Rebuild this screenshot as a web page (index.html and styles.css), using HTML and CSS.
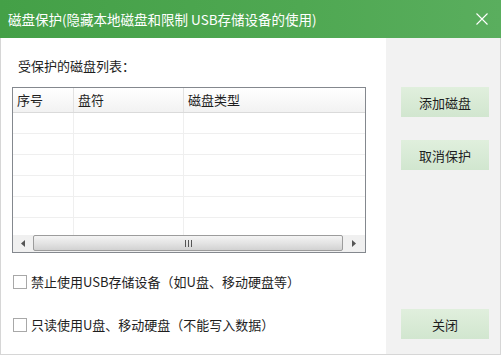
FILE: index.html
```html
<!DOCTYPE html>
<html lang="zh-CN">
<head>
    <meta charset="UTF-8">
    <title>磁盘保护</title>
    <link rel="stylesheet" href="styles.css">
</head>
<body>

<div class="window">
    <div class="titlebar">
        <span class="title">磁盘保护(隐藏本地磁盘和限制 USB存储设备的使用)</span>
        <svg class="close" width="12" height="12" viewBox="0 0 12 12">
            <path d="M0.5 0.5 L11.5 11.5 M11.5 0.5 L0.5 11.5" stroke="#ffffff" stroke-width="1.1" fill="none"/>
        </svg>
    </div>

    <div class="content">
        <div class="main">
            <div class="list-label">受保护的磁盘列表：</div>

            <div class="disk-list">
                <div class="list-head">
                    <div class="col col-no">序号</div>
                    <div class="col col-letter">盘符</div>
                    <div class="col col-type">磁盘类型</div>
                </div>
                <div class="list-body">
                    <div class="row"><div class="col col-no"></div><div class="col col-letter"></div><div class="col col-type"></div></div>
                    <div class="row"><div class="col col-no"></div><div class="col col-letter"></div><div class="col col-type"></div></div>
                    <div class="row"><div class="col col-no"></div><div class="col col-letter"></div><div class="col col-type"></div></div>
                    <div class="row"><div class="col col-no"></div><div class="col col-letter"></div><div class="col col-type"></div></div>
                    <div class="row"><div class="col col-no"></div><div class="col col-letter"></div><div class="col col-type"></div></div>
                    <div class="row"><div class="col col-no"></div><div class="col col-letter"></div><div class="col col-type"></div></div>
                </div>
                <div class="hscroll">
                    <div class="arrow-btn">
                        <svg width="4" height="7" viewBox="0 0 4 7"><path d="M4 0 L0 3.5 L4 7 Z" fill="#555"/></svg>
                    </div>
                    <div class="thumb">
                        <span class="grip"></span><span class="grip"></span><span class="grip"></span>
                    </div>
                    <div class="arrow-btn">
                        <svg width="4" height="7" viewBox="0 0 4 7"><path d="M0 0 L4 3.5 L0 7 Z" fill="#555"/></svg>
                    </div>
                </div>
            </div>

            <label class="check">
                <span class="box"></span>
                <span>禁止使用USB存储设备（如U盘、移动硬盘等）</span>
            </label>
            <label class="check">
                <span class="box"></span>
                <span>只读使用U盘、移动硬盘（不能写入数据）</span>
            </label>
        </div>

        <div class="side">
            <button class="btn">添加磁盘</button>
            <button class="btn">取消保护</button>
            <button class="btn btn-close">关闭</button>
        </div>
    </div>
</div>

</body>
</html>
```

FILE: styles.css
```css
body {
    margin: 0;
    padding: 0;
    font-family: "Noto Sans CJK SC", "Noto Sans", sans-serif;
    font-size: 13px;
    color: #1e1e1e;
    background-color: #ffffff;
}

.window {
    width: 501px;
    height: 355px;
    box-sizing: border-box;
    border: 1px solid #d6d6d6;
    border-top: none;
    display: flex;
    flex-direction: column;
}

.titlebar {
    height: 38px;
    margin: 0 -1px;
    padding: 0 13px 0 8px;
    background: linear-gradient(to right, #44a047, #4fa852 60%, #5aae5e);
    color: #ffffff;
    display: flex;
    align-items: center;
    justify-content: space-between;
    flex-shrink: 0;
}

.title {
    font-size: 13.5px;
    line-height: 18px;
}

.close {
    display: block;
}

.content {
    flex: 1;
    display: flex;
}

.main {
    width: 385px;
    padding: 20px 0 0 11px;
    box-sizing: border-box;
    background-color: #ffffff;
}

.list-label {
    line-height: 16px;
    padding-left: 6px;
    margin-bottom: 13px;
}

.disk-list {
    width: 354px;
    height: 166px;
    box-sizing: border-box;
    border: 1px solid #84888e;
    display: flex;
    flex-direction: column;
    overflow: hidden;
}

.list-head {
    height: 24px;
    flex-shrink: 0;
    display: flex;
    background: linear-gradient(#ffffff, #f2f2f2);
    border-bottom: 1px solid #dadada;
}

.list-head .col {
    line-height: 24px;
    padding-left: 4px;
    border-right: 1px solid #e2e2e2;
}

.col {
    box-sizing: border-box;
    flex-shrink: 0;
}

.col-no {
    width: 61px;
}

.col-letter {
    width: 110px;
}

.col-type {
    width: 200px;
}

.list-body {
    flex: 1;
    overflow: hidden;
}

.row {
    height: 21px;
    box-sizing: border-box;
    display: flex;
    border-bottom: 1px solid #efefef;
}

.row .col {
    border-right: 1px solid #efefef;
}

.hscroll {
    height: 17px;
    flex-shrink: 0;
    display: flex;
    background-color: #f0f0f0;
}

.arrow-btn {
    width: 20px;
    display: flex;
    align-items: center;
    justify-content: center;
}

.arrow-btn:last-child {
    width: 22px;
}

.thumb {
    flex: 1;
    margin: 0 0 1px;
    border: 1px solid #9c9c9c;
    border-radius: 2px;
    background: linear-gradient(#f4f4f4, #e4e4e4 50%, #d2d2d2);
    display: flex;
    align-items: center;
    justify-content: center;
    gap: 2px;
}

.grip {
    width: 1px;
    height: 7px;
    background-color: #555;
}

.check {
    display: flex;
    align-items: center;
    gap: 4px;
    line-height: 16px;
    margin-top: 21px;
    padding-left: 1px;
}

.check + .check {
    margin-top: 27px;
}

.box {
    width: 12px;
    height: 12px;
    border: 1px solid #a8a8a8;
    background-color: #ffffff;
}

.side {
    flex: 1;
    background-color: #f2f2f2;
    padding: 49px 0 15px 15px;
    display: flex;
    flex-direction: column;
    gap: 23px;
}

.btn {
    width: 88px;
    height: 30px;
    border: none;
    background: linear-gradient(#e0efdd, #d1e6cf);
    font-family: inherit;
    font-size: 13px;
    color: #1e1e1e;
    padding: 0;
    cursor: pointer;
}

.btn-close {
    margin-top: auto;
}
```
